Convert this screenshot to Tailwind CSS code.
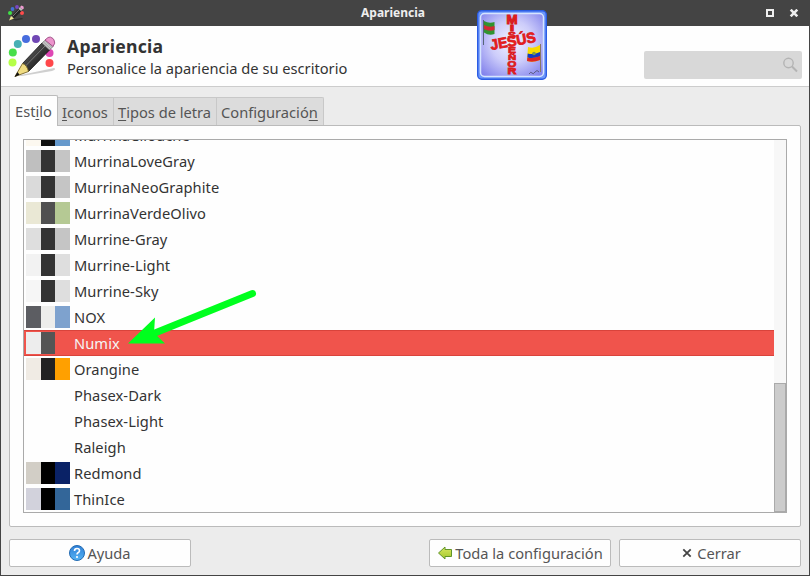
<!DOCTYPE html>
<html lang="es">
<head>
<meta charset="utf-8">
<title>Apariencia</title>
<script src="https://cdn.jsdelivr.net/npm/@tailwindcss/browser@4"></script>
</head>
<body class="w-[810px] h-[576px] overflow-hidden bg-[#444] font-['Noto_Sans',sans-serif] text-[14.667px] text-[#333]">
<svg class="absolute h-0 w-0">
  <defs>
    <linearGradient id="body" x1="0" y1="0" x2="1" y2="1"><stop offset="0" stop-color="#111"/><stop offset=".35" stop-color="#4a4a4a"/><stop offset=".55" stop-color="#333"/><stop offset="1" stop-color="#111"/></linearGradient>
    <linearGradient id="help" x1="0" y1="0" x2="0" y2="1"><stop offset="0" stop-color="#2f7fd6"/><stop offset="1" stop-color="#55b4f4"/></linearGradient>
    <linearGradient id="arrow" x1="0" y1="0" x2="0" y2="1"><stop offset="0" stop-color="#d8e860"/><stop offset="1" stop-color="#a3c62c"/></linearGradient>
    <radialGradient id="logo" cx=".5" cy=".45" r=".68"><stop offset="0" stop-color="#f4f4ff"/><stop offset=".5" stop-color="#ccccfa"/><stop offset="1" stop-color="#8484ec"/></radialGradient>
    <symbol id="pencil" viewBox="0 0 48 48">
      <path d="M8 42 L46 34 Q49 35 44 37 L14 42Z" fill="#777" opacity=".35"/>
      <circle cx="4.500" cy="28.500" r="4" fill="#b5ff47"/><circle cx="4.800" cy="18.500" r="4" fill="#47de49"/><circle cx="9.800" cy="10" r="4" fill="#47b0b4"/><circle cx="18" cy="5" r="4" fill="#476cde"/><circle cx="28" cy="5" r="4" fill="#7047b4"/><circle cx="41.500" cy="19" r="4" fill="#de47b4"/><circle cx="41.500" cy="29" r="4" fill="#ff474a"/>
      <path d="M14.500 29.500 L34 9 L41.500 16 L20.500 37.500Z" fill="url(#body)" stroke="#111" stroke-width=".8"/>
      <path d="M17.500 32 L37 12" stroke="#777" stroke-width="1"/>
      <path d="M14.500 29.500 Q19 31 20.500 37.500 L7 42.500Z" fill="#f0dc82" stroke="#756327" stroke-width=".9"/>
      <path d="M9.500 38 L11.500 40.800 L6.500 43Z" fill="#111"/>
      <path d="M34 9 L38 5.500 L45 12.500 L41.500 16Z" fill="#c8c8c8" stroke="#777" stroke-width=".8"/><path d="M35.500 8 L43 15 M37 6.500 L44 13.500" stroke="#888" stroke-width=".6"/>
      <path d="M37 6 L40 3.500 Q42 2 45 4.500 L46 6 Q48 9 45 12.500Z" fill="#ec94cc" stroke="#9c4b82" stroke-width=".9"/>
    </symbol>
  </defs>
</svg>
<div class="relative flex h-full flex-col px-px pb-px">
  <header class="relative flex h-[26px] shrink-0 items-center justify-center">
    <svg class="absolute left-[7px] top-[5px] h-4 w-4" viewBox="0 0 16 16">
      <path d="M4 14.500 L14 13 L15 14 L8 15.500Z" fill="#2c2c2c"/>
      <circle cx="2" cy="8" r="2" fill="#3fe046"/><circle cx="4.500" cy="4" r="1.900" fill="#4272d8"/><circle cx="9" cy="2" r="1.900" fill="#7b47c4"/><circle cx="14" cy="8" r="2" fill="#ff4b4b"/>
      <path d="M3.500 11 L11.500 2.500 L14.500 5 L6 13.500Z" fill="#242424"/><path d="M4.500 11.500 L12 3.800" stroke="#777" stroke-width="1"/>
      <path d="M3 11 L6 13.500 L1 15.500Z" fill="#efe396"/>
      <path d="M10.500 3.500 L12 2 L14.500 4.500 L13 6Z" fill="#bbb"/><path d="M12 2 L13.500 .5 L15.500 1.500 L15.800 3.500 L14.500 4.500Z" fill="#ee9bd2"/>
    </svg>
    <span class="pr-[24px] text-[12px] leading-[26px] font-bold text-[#eee]">Apariencia</span>
    <svg class="absolute right-[10px] top-[9px] h-[8px] w-[33px]" viewBox="0 0 33 8"><path d="M1 1H7V7H1Z" fill="none" stroke="#eee" stroke-width="2"/><path d="M24.700 .7 L31.300 7.300 M31.300 .7 L24.700 7.300" stroke="#eee" stroke-width="2.600"/></svg>
  </header>
  <section class="flex h-[61px] shrink-0 border-b border-[#ccc] bg-[#fefefe] pl-[7px] pr-[7px]">
    <svg class="mt-[8px] h-12 w-12"><use href="#pencil"/></svg>
    <div class="ml-[11px] mt-[8px] whitespace-nowrap">
      <h1 class="text-[17.600px] leading-6 font-bold tracking-[0.250px]">Apariencia</h1>
      <p class="leading-5">Personalice la apariencia de su escritorio</p>
    </div>
    <div class="ml-auto mt-[25px] flex h-[28px] w-[158px] items-center justify-end rounded-[2px] bg-[#d8d8d8] pr-[4px]">
      <svg class="h-4 w-4" viewBox="0 0 16 16" fill="none" stroke="#b4b4b4"><circle cx="6.500" cy="6" r="4.700" stroke-width="1.400"/><path d="M10 9.500 L15 14.500" stroke-width="2"/></svg>
    </div>
  </section>
  <main class="flex min-h-0 flex-1 flex-col bg-[#ececec] px-2 pt-2">
    <nav class="relative z-10 flex h-[31px] shrink-0 items-end whitespace-nowrap text-[#555]">
      <div class="h-[31px] w-[49px] rounded-t-[2px] border border-b-0 border-[#bbb] bg-[#fefefe] pl-[5px] leading-[31px]">Est<u class="underline-offset-2">i</u>lo</div>
      <div class="mb-px h-[28px] w-[56px] border-t border-r border-[#c8c8c8] bg-[#dcdcdc] pl-[4px] leading-[28px]"><u class="underline-offset-2">I</u>conos</div>
      <div class="mb-px h-[28px] w-[103px] border-t border-r border-[#c8c8c8] bg-[#dcdcdc] pl-[4px] leading-[28px]"><u class="underline-offset-2">T</u>ipos de letra</div>
      <div class="mb-px h-[28px] w-[107px] rounded-tr-[2px] border-t border-r border-[#c8c8c8] bg-[#dcdcdc] pl-[4px] leading-[28px]">Configuració<u class="underline-offset-2">n</u></div>
    </nav>
    <section class="-mt-px h-[402px] w-[792px] shrink-0 rounded-[2px] rounded-tl-none border border-[#bbb] bg-[#fefefe] p-[13px]">
      <div class="flex h-[374px] w-[764px] overflow-hidden border border-[#aaa]">
        <ul id="themes" class="-mt-[18px] w-[750px] shrink-0 tracking-[0.080px]"></ul>
        <div class="flex w-[12px] flex-col justify-end bg-[#f7f7f7]"><div class="h-[129px] border border-[#aaa] bg-[#ccc]"></div></div>
      </div>
    </section>
    <footer class="mt-3 flex h-[28px] w-[792px] gap-2 leading-[27px] whitespace-nowrap text-[#555]">
      <button class="mr-auto flex w-[182px] items-center justify-center gap-[2px] rounded-[2px] border border-[#bbb] bg-[#fefefe]">
        <svg class="h-4 w-4" viewBox="0 0 16 16"><circle cx="8" cy="8" r="7.500" fill="url(#help)" stroke="#236bb2"/><path d="M5.500 6 Q5.500 3.500 8 3.500 Q10.500 3.500 10.500 5.700 Q10.500 7 9 7.800 Q8 8.400 8 9.600" fill="none" stroke="#fff" stroke-width="1.600"/><circle cx="8" cy="12" r="1.100" fill="#fff"/></svg>
        <span>Ayuda</span>
      </button>
      <button class="flex w-[182px] items-center justify-center gap-[2px] rounded-[2px] border border-[#bbb] bg-[#fefefe]">
        <svg class="h-4 w-4" viewBox="0 0 16 16"><path d="M1.500 8 L8 2 V4.500 H14.500 V11.500 H8 V14Z" fill="url(#arrow)" stroke="#61942a"/></svg>
        <span>Toda la configuración</span>
      </button>
      <button class="flex w-[182px] items-center justify-center gap-[2px] rounded-[2px] border border-[#bbb] bg-[#fefefe]">
        <svg class="h-4 w-4" viewBox="0 0 16 16"><path d="M4.300 4.300 L11.700 11.700 M11.700 4.300 L4.300 11.700" stroke="#444" stroke-width="1.800"/></svg>
        <span>Cerrar</span>
      </button>
    </footer>
  </main>

  <!-- badge over the title area -->
  <svg class="absolute left-[477px] top-[10px] h-[70px] w-[70px]" viewBox="0 0 70 70">
    <rect x=".7" y=".7" width="68.600" height="68.600" rx="4" fill="#6d97fa" stroke="#2b5ce4" stroke-width="1.400"/>
    <rect x="3.500" y="3.500" width="63" height="63" rx="4" fill="url(#logo)" stroke="#d5e4ff" stroke-width="1.500"/>
    <path d="M6.500 10V35" stroke="#567" stroke-width="1"/>
    <path d="M7 11 Q12 14 17.500 12 V24 Q12 26 7 22.500Z" fill="#31932f"/><path d="M7 15 Q12 18 17.500 16 V20 Q12 22 7 19Z" fill="#d42835"/>
    <path d="M63.500 34V62" stroke="#876" stroke-width="1"/>
    <path d="M51 37 Q57 39 63 35 V50 Q56 53 50 51Z" fill="#f8dc00"/><path d="M50.700 43.500 Q57 45 63 42 V46.500 Q56 49 50.400 47.500Z" fill="#153ac4"/><path d="M50.300 47.500 Q56 49 63 46 V50 Q56 53 50 51Z" fill="#de2525"/><circle cx="57" cy="43.500" r="1.800" fill="#7b9b48"/>
    <g font-family="Liberation Sans, sans-serif" font-weight="700" fill="#ee1c1c" stroke="#d81c20" stroke-width=".8" text-anchor="middle">
      <g font-size="9.500">
        <text transform="translate(35 14) scale(1.400 1.350)">M</text><text transform="translate(35 21) scale(1.700 1)">I</text><text transform="translate(35 28) scale(1.250 .95)">S</text><text transform="translate(35 42.500) scale(1.250 .9)">E</text><text transform="translate(35 50) scale(1.200 .8)">Ñ</text><text transform="translate(35 57) scale(1.200 .9)">O</text><text transform="translate(35 64) scale(1.300 .95)">R</text>
      </g>
      <text x="36" y="36" font-size="14.500" textLength="46" lengthAdjust="spacingAndGlyphs" transform="rotate(-10 36 31)">JESÚS</text>
    </g>
    <path d="M52 64 q2 -3 3 -1 t3 -1 t4 0" fill="none" stroke="#445" stroke-width=".7"/>
  </svg>

  <!-- annotation arrow -->
  <svg class="pointer-events-none absolute left-[120px] top-[280px] h-[75px] w-[145px]" viewBox="0 0 145 75">
    <path d="M132.500 13.500 L30 55" stroke="#00ff1e" stroke-width="7" stroke-linecap="round"/>
    <path d="M8 63.500 L35 37.500 L34 53 L45 63.500Z" fill="#00ff1e"/>
  </svg>
</div>
<script>
const themes = [
  ['MurrinaCilouche', '#fcf8f0', '#101010', '#6699cc'],
  ['MurrinaLoveGray', '#bfbfbf', '#333333', '#c5c5c5'],
  ['MurrinaNeoGraphite', '#dadada', '#333333', '#c5c5c5'],
  ['MurrinaVerdeOlivo', '#eae8d5', '#505050', '#b5c994'],
  ['Murrine-Gray', '#dedede', '#333333', '#c5c5c5'],
  ['Murrine-Light', '#f2f2f2', '#333333', '#dedede'],
  ['Murrine-Sky', '#f6f6f6', '#333333', '#dedede'],
  ['NOX', '#5c5d62', '#ededeb', '#7ea2ce'],
  ['Numix', '#ededed', '#555555', '#f0544c'],
  ['Orangine', '#f0ebe4', '#222222', '#ffa000'],
  ['Phasex-Dark'], ['Phasex-Light'], ['Raleigh'],
  ['Redmond', '#d2cec6', '#000000', '#0a2266'],
  ['ThinIce', '#d2d2dc', '#000000', '#336699'],
];
const widths = [15, 14, 15];
document.getElementById('themes').innerHTML = themes.map(([name, ...colors]) => {
  const state = name === 'Numix' ? 'bg-[#f0544c] text-[#f5f5f5] border-y border-[#d9433b]' : 'border-y border-transparent';
  const swatches = colors.map((c, i) => `<i style="width:${widths[i]}px;background:${c}"></i>`).join('');
  return `<li class="flex h-[26px] items-center pl-[2px] leading-[24px] ${state}"><span class="flex h-[22px] w-[44px] mr-[4px] shrink-0">${swatches}</span><span>${name}</span></li>`;
}).join('');
</script>
</body>
</html>
